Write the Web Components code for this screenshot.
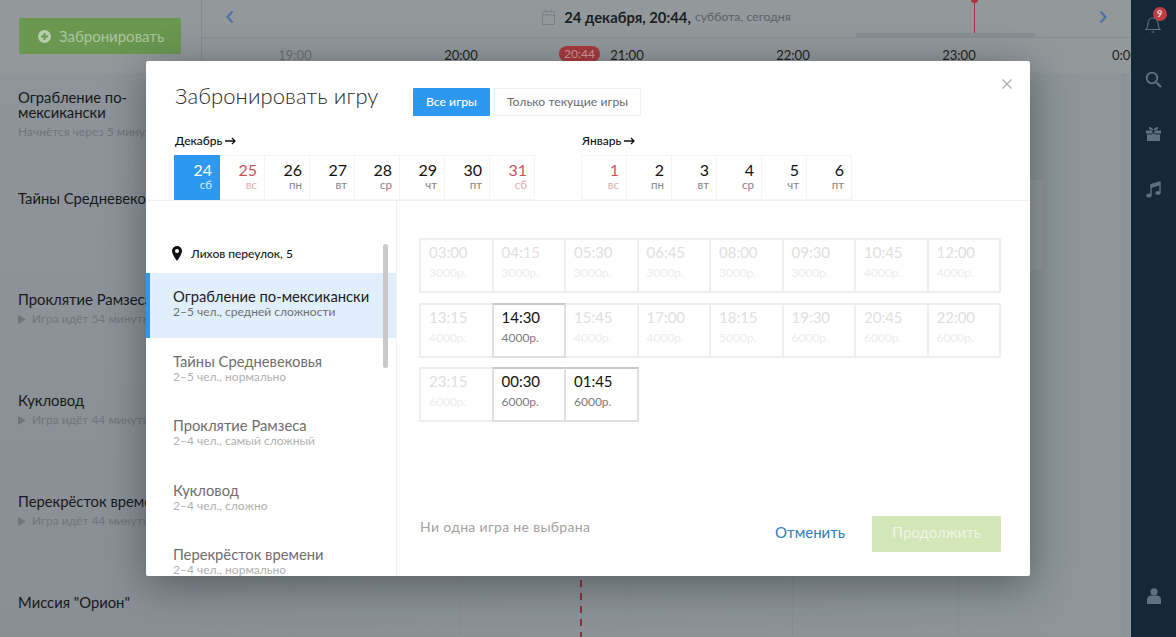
<!DOCTYPE html>
<html lang="ru">
<head>
<meta charset="utf-8">
<title>Забронировать игру</title>
<style>
html,body{margin:0;padding:0;height:637px;overflow:hidden;background:#8b9297}
body{font-family:Lato,"Noto Sans",sans-serif}
</style>
</head>
<body>
<booking-app></booking-app>
<script>
function def(name, css, html){
  customElements.define(name, class extends HTMLElement{
    connectedCallback(){
      if(this.shadowRoot) return;
      const r=this.attachShadow({mode:'open'});
      r.innerHTML='<style>'+css+'</style>'+(typeof html==='function'?html(this):html);
    }
  });
}
const attr=(e,n)=>e.getAttribute(n)||'';

def('top-header',`
:host{display:block;height:73px;position:relative;background:#93989b;color:#1b1d1f}
.row1{margin-left:201px;border-left:1px solid #868c90;border-bottom:1px solid #868c90;box-sizing:border-box;height:38px;display:flex;align-items:center;justify-content:center;position:relative;padding-bottom:4px}
.row2{height:35px;margin-left:201px;border-left:1px solid #868c90;display:flex;padding-left:10px;overflow:hidden;font-size:13px;align-items:flex-start}
.row2 span{flex:0 0 166px;text-align:center;line-height:16px;padding-top:9px;color:#1d1f21}
.row2 span.dim{color:#6c7276}
.btn{position:absolute;left:19px;top:18px;width:162px;height:36px;border-radius:2px;background:#6a9850;color:#aec5a0;font-size:15px;display:flex;align-items:center;box-sizing:border-box;padding-left:19px;gap:8px}
.date{display:flex;align-items:center;font-size:14.8px;font-weight:700}
.date small{font-size:12.3px;font-weight:400;color:#5b6165;margin-left:4px}
.date svg{margin-right:9px}
.prev,.next{position:absolute;top:10px}
.prev{left:22px}.next{right:22px}
.now{position:absolute;left:974px;top:0;width:1px;height:37px;background:#a5343c}
.now::before{content:"";position:absolute;left:-3px;top:-4px;width:7px;height:7px;border-radius:50%;background:#a5343c}
.load{position:absolute;left:856px;top:33px;width:179px;height:4px;background:#878d92}
.badge{position:absolute;left:559px;top:46px;width:41px;height:16px;border-radius:8px;background:#a8393c;color:#d69c9c;font-size:12px;line-height:16px;text-align:center}
`,`
<div class="row1">
  <svg class="prev" width="12" height="14" viewBox="0 0 12 14"><path d="M8.500 1.500 3.500 7l5 5.500" fill="none" stroke="#4a74a6" stroke-width="2.200"/></svg>
  <div class="date">
    <svg width="13" height="16" viewBox="0 0 13 16"><path d="M.5 2.500h12v13H.5zM.5 6h12M3.500.5v3M9.500.5v3" fill="none" stroke="#7b8185"/></svg>
    24 декабря, 20:44,<small>суббота, сегодня</small>
  </div>
  <svg class="next" width="12" height="14" viewBox="0 0 12 14"><path d="M3.500 1.500 8.500 7l-5 5.500" fill="none" stroke="#4a74a6" stroke-width="2.200"/></svg>
</div>
<div class="row2"><span class="dim">19:00</span><span>20:00</span><span>21:00</span><span>22:00</span><span>23:00</span><span>0:00</span></div>
<div class="btn">
  <svg width="13" height="13" viewBox="0 0 13 13"><circle cx="6.500" cy="6.500" r="6.500" fill="#b9cdac"/><path d="M6.500 3v7M3 6.500h7" stroke="#6a9850" stroke-width="2"/></svg>
  Забронировать
</div>
<div class="now"></div><div class="load"></div><div class="badge">20:44</div>
`);

def('game-row',`
:host{display:block;height:101px;box-sizing:border-box;padding:7px 0 0 18px;white-space:nowrap}
.t{font-size:14.8px;line-height:15px;color:#17191b}
.s{font-size:12px;line-height:14px;color:#6f767b;margin-top:5px;display:flex;align-items:center;gap:6px}
svg{flex:none}
`,e=>{
  const t=attr(e,'name').split('|').join('<br>');
  const play=e.hasAttribute('play')?'<svg width="8" height="9" viewBox="0 0 8 9"><path d="M0 0l8 4.500L0 9z" fill="#6f767b"/></svg>':'';
  const sub=attr(e,'sub');
  return `<div class="t">${t}</div>${sub?`<div class="s">${play}${sub}</div>`:''}`;
});

def('game-list',`
:host{display:block;width:201px;flex:none;padding-top:10px;box-sizing:border-box;background:linear-gradient(#8e9499,#898f94);overflow:hidden}
`,`
<game-row name="Ограбление по-|мексикански" sub="Начнётся через 5 минут"></game-row>
<game-row name="Тайны Средневековья"></game-row>
<game-row play name="Проклятие Рамзеса" sub="Игра идёт 54 минуты"></game-row>
<game-row play name="Кукловод" sub="Игра идёт 44 минуты"></game-row>
<game-row play name="Перекрёсток времени" sub="Игра идёт 44 минуты"></game-row>
<game-row name='Миссия "Орион"'></game-row>
`);

def('schedule-area',`
:host{display:block;flex:1;position:relative;background:
 repeating-linear-gradient(90deg,transparent 0 93px,#878e93 93px 94px,transparent 94px 166px),
 linear-gradient(90deg,#899095,#8d9599 95%)}
.line{position:absolute;left:379px;top:0;bottom:0;width:1.5px;background:repeating-linear-gradient(#8e2f3e 0 7px,transparent 7px 13px)}
.slot{position:absolute;left:829px;top:107px;width:12px;height:90px;background:#959b9f}
`,`<div class="line"></div><div class="slot"></div>`);

def('side-rail',`
:host{display:flex;flex-direction:column;align-items:center;width:45px;flex:none;background:#152838;position:relative}
svg{display:block}
.b{position:relative;margin-top:14px;height:20px;margin-left:-2px}
.n{position:absolute;left:8px;top:-7.500px;width:14px;height:14px;border-radius:50%;background:#bf3e43;color:#f0dcdc;font:700 9px/14px Lato,"Noto Sans",sans-serif;text-align:center}
.s{margin-top:36.500px}.g{margin-top:38px}.m{margin-top:40px}
.u{margin-top:auto;margin-bottom:33px}
`,`
<div class="b"><svg width="16" height="20" viewBox="0 0 16 20"><path d="M1 15.500c1.600-1.600 2-3 2-6 0-3 2-5.500 5-5.500s5 2.500 5 5.500c0 3 .4 4.400 2 6zM6.500 18h3" fill="none" stroke="#5e7382" stroke-width="1.100"/></svg><div class="n">9</div></div>
<svg class="s" width="17" height="17" viewBox="0 0 17 17"><circle cx="7" cy="7" r="5.300" fill="none" stroke="#5e7382" stroke-width="1.800"/><path d="M11 11l5 5" stroke="#5e7382" stroke-width="2.200"/></svg>
<svg class="g" width="15" height="15" viewBox="0 0 15 15"><path d="M0 4.500h15v3H0zM1 8.500h5.500V15H1zM8.500 8.500H14V15H8.500zM6.500 4.500h2V15h-2z M7.500 4C5 0 2 .5 3 2.800 3.600 4 5.500 4 7.500 4zM7.500 4c2.500-4 5.500-3.500 4.500-1.200C11.400 4 9.500 4 7.500 4z" fill="#5e7382" fill-rule="evenodd"/></svg>
<svg class="m" width="15" height="17" viewBox="0 0 15 17"><path d="M5 3.500V14M14 .8V12" fill="none" stroke="#5e7382" stroke-width="1.300"/><path d="M5 3.500 14 .8v3L5 6.500z" fill="#5e7382" stroke="#5e7382"/><ellipse cx="3" cy="14.500" rx="2.700" ry="2" fill="#5e7382"/><ellipse cx="12" cy="12" rx="2.700" ry="2" fill="#5e7382"/></svg>
<svg class="u" width="14" height="16" viewBox="0 0 14 16"><circle cx="7" cy="3.800" r="3.500" fill="#5e7382"/><path d="M0 16v-4.500C0 9 2.500 7.500 4.500 7.500h5C11.500 7.500 14 9 14 11.500V16z" fill="#5e7382"/></svg>
`);

def('day-cell',`
:host{display:block;flex:1 1 0;height:45px;box-sizing:border-box;border:1px solid #f4f4f4;border-left:0;padding:6px 7px 0 0;text-align:right;color:#111}
:host([first]){border-left:1px solid #f4f4f4}
:host([sel]){background:#2d98f0;color:#fff;border-color:#2d98f0}
:host([off]){color:#c9555b}
.n{font-size:16px;line-height:16px}
.d{font-size:11.500px;line-height:13px;color:#858585}
:host([sel]) .d{color:#d7ebfc}
:host([off]) .d{color:#dcaeb0}
`,e=>`<div class="n">${attr(e,'n')}</div><div class="d">${attr(e,'d')}</div>`);

def('month-strip',`
:host{display:block;flex:none}
.m{font-size:12px;line-height:15px;font-weight:500;color:#111;margin-bottom:7px;display:flex;align-items:center;gap:3px;padding-left:1px}
.r{display:flex}
`,e=>`<div class="m">${attr(e,'label')}<svg width="11" height="8" viewBox="0 0 11 8"><path d="M0 4h10M7 1l3 3-3 3" fill="none" stroke="#111" stroke-width="1.300"/></svg></div><div class="r"><slot></slot></div>`);

def('game-option',`
:host{display:block;height:64.5px;box-sizing:border-box;padding:14px 0 0 27px;white-space:nowrap;color:#6e6e6e}
:host([sel]){background:#e0effb;color:#1d1d1d;border-left:4px solid #2d98f0;padding-left:23px}
.t{font-size:14.750px;line-height:18px}
.s{font-size:12px;line-height:13px;color:#b0b0b0}
:host([sel]) .s{color:#6f6f6f}
`,e=>`<div class="t">${attr(e,'name')}</div><div class="s">${attr(e,'sub')}</div>`);

def('game-picker',`
:host{display:block;width:251px;flex:none;box-sizing:border-box;border-right:1px solid #f0f0f0;position:relative;overflow:hidden}
.a{height:72px;box-sizing:border-box;padding:43px 0 11px 26px;display:flex;align-items:center;gap:9px;font-size:12px;font-weight:500;color:#1a1a1a}
.bar{position:absolute;left:237px;top:43px;width:5px;height:124px;border-radius:3px;background:#c9c9c9}
`,`
<div class="a"><svg width="10" height="15" viewBox="0 0 10 15"><path fill-rule="evenodd" d="M5 0a5 5 0 0 1 5 5c0 3.500-5 10-5 10S0 8.500 0 5a5 5 0 0 1 5-5zm0 3a2 2 0 1 0 0 4 2 2 0 0 0 0-4z" fill="#111"/></svg>Лихов переулок, 5</div>
<game-option sel name="Ограбление по-мексикански" sub="2–5 чел., средней сложности"></game-option>
<game-option name="Тайны Средневековья" sub="2–5 чел., нормально"></game-option>
<game-option name="Проклятие Рамзеса" sub="2–4 чел., самый сложный"></game-option>
<game-option name="Кукловод" sub="2–4 чел., сложно"></game-option>
<game-option name="Перекрёсток времени" sub="2–4 чел., нормально"></game-option>
<div class="bar"></div>
`);

def('time-cell',`
:host{display:block;position:relative;height:55px;margin-right:-2px;box-sizing:border-box;border:2px solid #eeeeee;padding:3px 0 0 8px;color:#e0e0e0}
:host([on]){border-color:#e0e0e0;border-top-color:#c8c8c8;color:#111;z-index:1}
.t{font-size:15px;line-height:18px}
.p{font-size:12px;line-height:15px;margin-top:4px;color:#ececec}
:host([on]) .p{color:#7c7c7c}
`,e=>`<div class="t">${attr(e,'t')}</div><div class="p">${attr(e,'p')}</div>`);

def('time-grid',`
:host{display:grid;grid-template-columns:repeat(8,72.5px);row-gap:9.500px;width:582px}
`,`<slot></slot>`);

def('booking-modal',`
:host{position:absolute;left:146px;top:61px;width:884px;height:515px;background:#fff;border-radius:2px;box-shadow:0 8px 40px rgba(20,28,36,.45);display:flex;flex-direction:column;overflow:hidden}
.head{height:140px;flex:none;box-sizing:border-box;padding:27px 0 0 28px;border-bottom:1px solid #f0f0f0;position:relative}
.top{display:flex;height:28px;margin-bottom:17px}
h1{margin:-6px 35px 0 1px;font-size:22px;line-height:28px;font-weight:300;color:#2a2a2a;width:203px;white-space:nowrap;letter-spacing:.1px}
.tab{height:28px;box-sizing:border-box;font-size:12.200px;line-height:28px;text-align:center}
.tab.a{width:77px;background:#2d98f0;color:#fff;border-radius:1px;font-weight:500}
.tab.b{width:147px;margin-left:4px;border:1px solid #f0f0f0;line-height:26px;color:#6b6b6b}
.x{position:absolute;right:18px;top:18px}
.months{display:flex;gap:46px}
.body{flex:1;display:flex;min-height:0}
.right{flex:1;display:flex;flex-direction:column;padding:37px 30px 24px 22px}
.foot{margin-top:auto;display:flex;align-items:flex-start;height:36px;padding-left:1px}
.status{font-size:14px;line-height:16px;color:#a2a2a2;margin-top:3px;flex:1;letter-spacing:.32px}
.cancel{font-size:15px;line-height:33px;color:#2a80c0;margin-right:27px}
.go{width:129px;height:36px;border-radius:1px;background:#d3e6b8;color:#eef5e2;font-size:15px;line-height:33px;padding-bottom:3px;box-sizing:border-box;text-align:center}
`,`
<div class="head">
  <div class="top"><h1>Забронировать игру</h1><div class="tab a">Все игры</div><div class="tab b">Только текущие игры</div></div>
  <svg class="x" width="10" height="10" viewBox="0 0 10 10"><path d="M.5.5l9 9M9.500.5l-9 9" stroke="#a8a8a8" stroke-width="1.100"/></svg>
  <div class="months">
    <month-strip label="Декабрь" style="width:361px">
      <day-cell first sel n="24" d="сб"></day-cell><day-cell off n="25" d="вс"></day-cell><day-cell n="26" d="пн"></day-cell><day-cell n="27" d="вт"></day-cell><day-cell n="28" d="ср"></day-cell><day-cell n="29" d="чт"></day-cell><day-cell n="30" d="пт"></day-cell><day-cell off n="31" d="сб"></day-cell>
    </month-strip>
    <month-strip label="Январь" style="width:271px">
      <day-cell first off n="1" d="вс"></day-cell><day-cell n="2" d="пн"></day-cell><day-cell n="3" d="вт"></day-cell><day-cell n="4" d="ср"></day-cell><day-cell n="5" d="чт"></day-cell><day-cell n="6" d="пт"></day-cell>
    </month-strip>
  </div>
</div>
<div class="body">
  <game-picker></game-picker>
  <div class="right">
    <time-grid>
      <time-cell t="03:00" p="3000р."></time-cell><time-cell t="04:15" p="3000р."></time-cell><time-cell t="05:30" p="3000р."></time-cell><time-cell t="06:45" p="3000р."></time-cell><time-cell t="08:00" p="3000р."></time-cell><time-cell t="09:30" p="3000р."></time-cell><time-cell t="10:45" p="4000р."></time-cell><time-cell t="12:00" p="4000р."></time-cell>
      <time-cell t="13:15" p="4000р."></time-cell><time-cell on t="14:30" p="4000р."></time-cell><time-cell t="15:45" p="4000р."></time-cell><time-cell t="17:00" p="4000р."></time-cell><time-cell t="18:15" p="5000р."></time-cell><time-cell t="19:30" p="6000р."></time-cell><time-cell t="20:45" p="6000р."></time-cell><time-cell t="22:00" p="6000р."></time-cell>
      <time-cell t="23:15" p="6000р."></time-cell><time-cell on t="00:30" p="6000р."></time-cell><time-cell on t="01:45" p="6000р."></time-cell>
    </time-grid>
    <div class="foot"><div class="status">Ни одна игра не выбрана</div><div class="cancel">Отменить</div><div class="go">Продолжить</div></div>
  </div>
</div>
`);

def('booking-app',`
:host{width:1176px;height:637px;position:relative;overflow:hidden;display:flex}
.main{flex:1;display:flex;flex-direction:column;min-width:0}
.lower{flex:1;display:flex;min-height:0}
`,`
<div class="main"><top-header></top-header><div class="lower"><game-list></game-list><schedule-area></schedule-area></div></div>
<side-rail></side-rail>
<booking-modal></booking-modal>
`);
</script>
</body>
</html>
